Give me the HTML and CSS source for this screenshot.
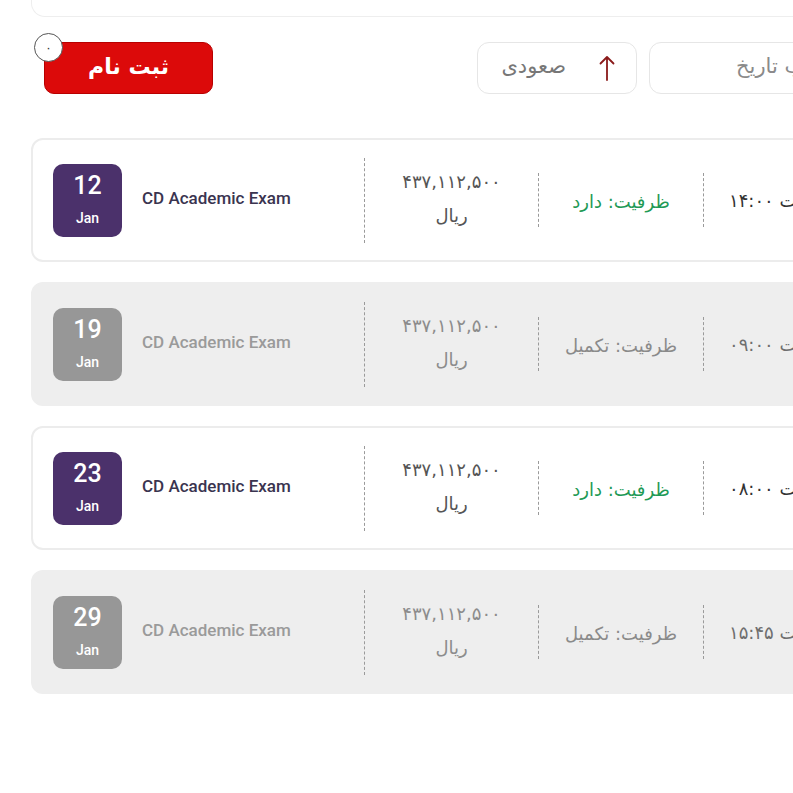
FILE: index.html
```html
<!DOCTYPE html>
<html lang="fa">
<head>
<meta charset="utf-8">
<title>آزمون‌ها</title>
<link rel="stylesheet" href="styles.css">
</head>
<body>
<div class="page">
  <div class="top-card"></div>

  <div class="controls">
    <button class="register" dir="rtl">ثبت نام<span class="badge">۰</span></button>
    <div class="sort-group">
      <div class="sort-box" dir="rtl">
        <svg class="arrow" width="16" height="26" viewBox="0 0 16 26"><path d="M8 25V2M1.5 8.5L8 2l6.5 6.5" fill="none" stroke="#8a1a1a" stroke-width="1.8" stroke-linecap="round" stroke-linejoin="round"/></svg>
        <span class="sort-text">صعودی</span>
      </div>
      <div class="field-box" dir="rtl"><span class="field-text">مرتب‌سازی به ترتیب تاریخ</span></div>
    </div>
  </div>

  <div class="list">
    <div class="card">
      <div class="date"><span class="day">12</span><span class="mon">Jan</span></div>
      <div class="title">CD Academic Exam</div>
      <div class="sep tall"></div>
      <div class="price" dir="rtl"><span>۴۳۷,۱۱۲,۵۰۰</span><span>ریال</span></div>
      <div class="sep"></div>
      <div class="cap ok" dir="rtl">ظرفیت: دارد</div>
      <div class="sep"></div>
      <div class="time" dir="rtl">ساعت ۱۴:۰۰</div>
    </div>

    <div class="card full">
      <div class="date"><span class="day">19</span><span class="mon">Jan</span></div>
      <div class="title">CD Academic Exam</div>
      <div class="sep tall"></div>
      <div class="price" dir="rtl"><span>۴۳۷,۱۱۲,۵۰۰</span><span>ریال</span></div>
      <div class="sep"></div>
      <div class="cap" dir="rtl">ظرفیت: تکمیل</div>
      <div class="sep"></div>
      <div class="time" dir="rtl">ساعت ۰۹:۰۰</div>
    </div>

    <div class="card">
      <div class="date"><span class="day">23</span><span class="mon">Jan</span></div>
      <div class="title">CD Academic Exam</div>
      <div class="sep tall"></div>
      <div class="price" dir="rtl"><span>۴۳۷,۱۱۲,۵۰۰</span><span>ریال</span></div>
      <div class="sep"></div>
      <div class="cap ok" dir="rtl">ظرفیت: دارد</div>
      <div class="sep"></div>
      <div class="time" dir="rtl">ساعت ۰۸:۰۰</div>
    </div>

    <div class="card full">
      <div class="date"><span class="day">29</span><span class="mon">Jan</span></div>
      <div class="title">CD Academic Exam</div>
      <div class="sep tall"></div>
      <div class="price" dir="rtl"><span>۴۳۷,۱۱۲,۵۰۰</span><span>ریال</span></div>
      <div class="sep"></div>
      <div class="cap" dir="rtl">ظرفیت: تکمیل</div>
      <div class="sep"></div>
      <div class="time" dir="rtl">ساعت ۱۵:۴۵</div>
    </div>
  </div>
</div>
</body>
</html>
```

FILE: styles.css
```css
html, body {
  margin: 0;
  padding: 0;
  background: #ffffff;
  overflow: hidden;
}
body {
  font-family: "DejaVu Sans", "Noto Sans", sans-serif;
  color: #333;
}
.page {
  width: 1000px;
  margin-left: 31px;
}
.top-card {
  height: 17px;
  box-sizing: border-box;
  border: 1px solid #eeeeee;
  border-top: none;
  border-radius: 0 0 0 14px;
}
.controls {
  display: flex;
  align-items: center;
  height: 52px;
  margin-top: 25px;
  padding-left: 13px;
}
.register {
  position: relative;
  width: 169px;
  height: 52px;
  border: 1px solid #b80000;
  border-radius: 10px;
  background: #dc0a0a;
  color: #ffffff;
  font-family: "DejaVu Sans", sans-serif;
  font-weight: bold;
  font-size: 22px;
  padding: 0 0 4px 0;
}
.badge {
  position: absolute;
  left: -11px;
  top: -10px;
  width: 27px;
  height: 27px;
  border-radius: 50%;
  border: 1px solid #555;
  background: #ffffff;
  color: #333;
  font-size: 12px;
  font-weight: normal;
  display: flex;
  align-items: center;
  justify-content: center;
}
.sort-group {
  display: flex;
  gap: 12px;
  margin-left: 264px;
}
.sort-box {
  width: 160px;
  height: 52px;
  box-sizing: border-box;
  border: 1px solid #e6e6e6;
  border-radius: 12px;
  display: flex;
  align-items: center;
  padding-right: 21px;
  gap: 33px;
}
.arrow {
  display: block;
}
.sort-text {
  color: #777777;
  font-size: 21px;
  padding-bottom: 4px;
}
.field-box {
  width: 330px;
  height: 52px;
  box-sizing: border-box;
  border: 1px solid #e6e6e6;
  border-radius: 12px;
  display: flex;
  align-items: center;
  justify-content: flex-end;
  padding-left: 86px;
  overflow: hidden;
}
.field-text {
  color: #8a8a8a;
  font-size: 21px;
  padding-bottom: 4px;
  white-space: nowrap;
}
.list {
  margin-top: 44px;
  display: flex;
  flex-direction: column;
  gap: 20px;
}
.card {
  height: 124px;
  box-sizing: border-box;
  border: 2px solid #ececec;
  border-radius: 12px;
  background: #ffffff;
  display: flex;
  align-items: center;
  padding-left: 20px;
}
.card.full {
  background: #eeeeee;
  border-color: #eeeeee;
}
.date {
  width: 69px;
  height: 73px;
  border-radius: 10px;
  background: #4b316b;
  color: #ffffff;
  display: flex;
  flex-direction: column;
  align-items: center;
  font-family: Roboto, "Liberation Sans", sans-serif;
  flex: none;
}
.full .date {
  background: #979797;
}
.day {
  font-size: 25px;
  font-weight: 500;
  line-height: 28px;
  margin-top: 8px;
}
.mon {
  font-size: 14px;
  font-weight: 500;
  line-height: 18px;
  margin-top: 9px;
}
.title {
  width: 222px;
  margin-left: 20px;
  font-family: Roboto, "Liberation Sans", sans-serif;
  font-size: 17px;
  font-weight: 500;
  color: #3a3450;
  padding-bottom: 4px;
  flex: none;
}
.full .title {
  color: #9a9a9a;
}
.sep {
  width: 0;
  height: 54px;
  border-left: 1px dashed #9a9a9a;
  flex: none;
}
.sep.tall {
  height: 85px;
}
.price {
  width: 173px;
  display: flex;
  flex-direction: column;
  align-items: center;
  font-size: 18px;
  line-height: 34px;
  color: #555555;
  padding-bottom: 3px;
  flex: none;
}
.full .price {
  color: #8c8c8c;
}
.cap {
  width: 164px;
  text-align: center;
  font-size: 18px;
  color: #8a8a8a;
  padding-top: 2px;
  flex: none;
}
.cap.ok {
  color: #1f9a56;
}
.time {
  width: 200px;
  text-align: left;
  padding-left: 25px;
  font-size: 18px;
  color: #333333;
  flex: none;
}
.full .time {
  color: #6f6f6f;
}
```
